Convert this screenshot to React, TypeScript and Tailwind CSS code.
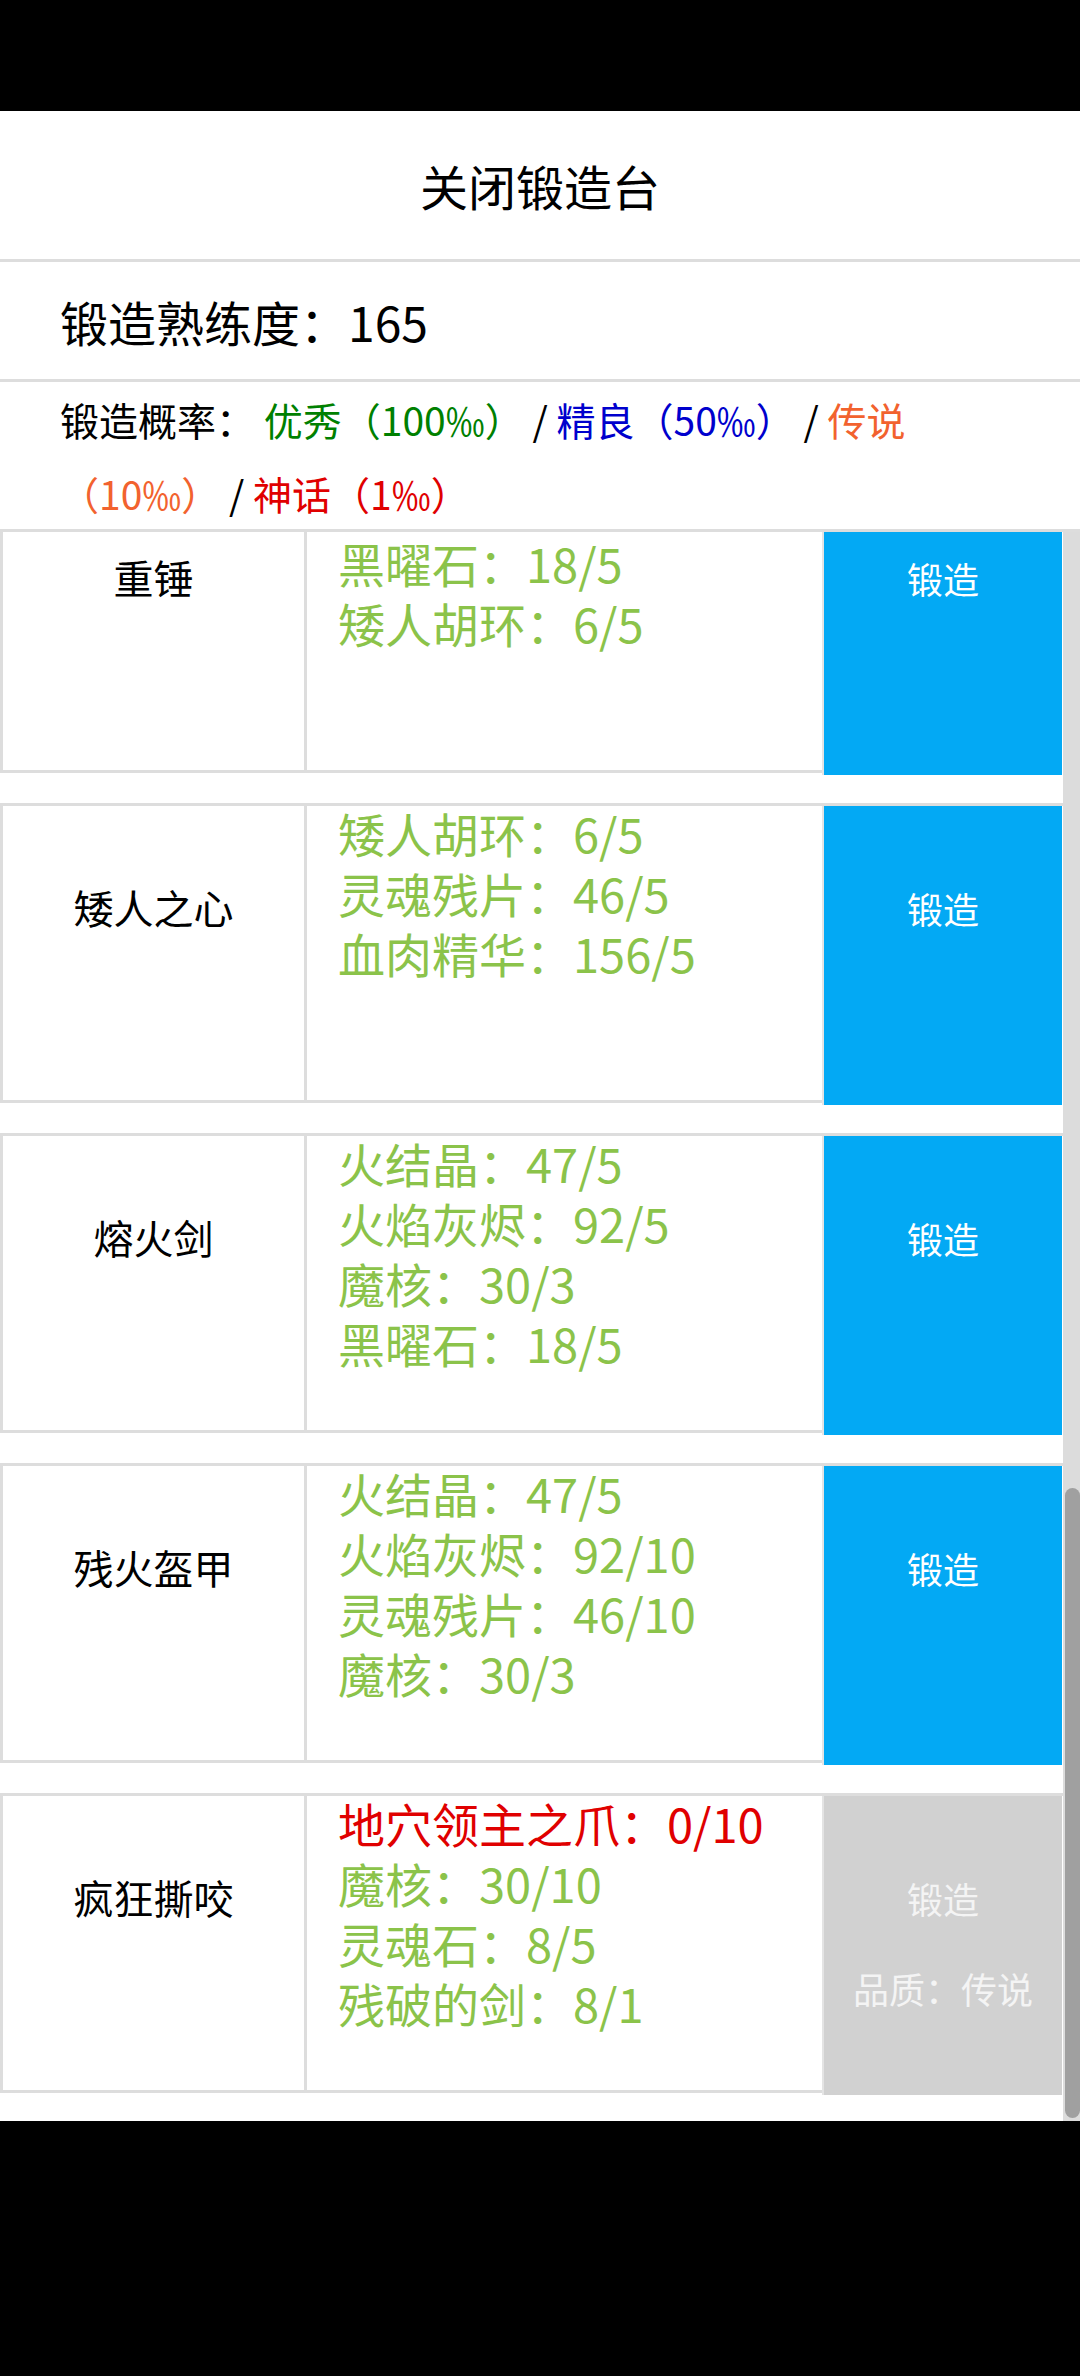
import React from 'react';

type Material = { label: string; lack?: boolean };

interface Recipe {
  name: string;
  materials: Material[];
  disabled?: boolean;
  quality?: string;
  // first material line is scrolled out of view
  clippedTop?: boolean;
}

const recipes: Recipe[] = [
  {
    name: '重锤',
    materials: [{ label: '黑曜石：18/5' }, { label: '矮人胡环：6/5' }],
    clippedTop: true,
  },
  {
    name: '矮人之心',
    materials: [{ label: '矮人胡环：6/5' }, { label: '灵魂残片：46/5' }, { label: '血肉精华：156/5' }],
  },
  {
    name: '熔火剑',
    materials: [
      { label: '火结晶：47/5' },
      { label: '火焰灰烬：92/5' },
      { label: '魔核：30/3' },
      { label: '黑曜石：18/5' },
    ],
  },
  {
    name: '残火盔甲',
    materials: [
      { label: '火结晶：47/5' },
      { label: '火焰灰烬：92/10' },
      { label: '灵魂残片：46/10' },
      { label: '魔核：30/3' },
    ],
  },
  {
    name: '疯狂撕咬',
    materials: [
      { label: '地穴领主之爪：0/10', lack: true },
      { label: '魔核：30/10' },
      { label: '灵魂石：8/5' },
      { label: '残破的剑：8/1' },
    ],
    disabled: true,
    quality: '品质：传说',
  },
];

const RecipeRow: React.FC<{ recipe: Recipe }> = ({ recipe }) => (
  <div className="flex w-[1063px] h-[302px] mb-[28px] border-t-[3px] border-[#dddddd]">
    {/* Name */}
    <div className="w-[304px] mb-[2px] border-l-[3px] border-b-[3px] border-[#dddddd] pt-[76px] text-center text-[40px] leading-[50px] text-black">
      {recipe.name}
    </div>

    {/* Materials */}
    <div className={`flex-1 mb-[2px] border-l-[3px] border-b-[3px] border-[#dddddd] pl-[31px] ${recipe.clippedTop ? 'pt-[57px]' : '-mt-[3px]'}`}>
      {recipe.materials.map((m, i) => (
        <div
          key={i}
          className={`text-[47px] leading-[60px] whitespace-nowrap ${m.lack ? 'text-[#e00000]' : 'text-[#8bc34a]'}`}
        >
          {m.label}
        </div>
      ))}
    </div>

    {/* Action */}
    <div
      className={`w-[240px] mr-[1px] flex flex-col items-center pt-[77px] text-[36px] leading-[50px] border-l-[2px] border-[#e4e4e4] ${
        recipe.disabled ? 'bg-[#d1d1d1] text-[#f4f4f4]' : 'bg-[#03a9f4] text-white'
      }`}
    >
      <span>锻造</span>
      {recipe.quality && <span className="mt-[40px]">{recipe.quality}</span>}
    </div>
  </div>
);

export default function App() {
  return (
    <div className="w-[1080px] h-[2376px] bg-black flex flex-col font-['Noto_Sans_CJK_SC',sans-serif]">
      <div className="h-[111px] shrink-0" />

      <div className="h-[2010px] shrink-0 bg-white flex flex-col">
        {/* Close */}
        <div className="h-[151px] shrink-0 flex items-center justify-center border-b-[3px] border-[#dddddd] text-[48px] text-black">
          关闭锻造台
        </div>

        {/* Proficiency */}
        <div className="h-[120px] shrink-0 flex items-center pl-[60px] border-b-[3px] border-[#dddddd] text-[48px] text-black">
          锻造熟练度：165
        </div>

        {/* Probabilities */}
        <div className="h-[150px] shrink-0 pl-[60px] text-[39px] leading-[74px] text-black border-b-[3px] border-[#dddddd]">
          <div className="whitespace-nowrap">
            锻造概率：{' '}
            <span className="text-[#008000]">优秀（100‰）</span> /{' '}
            <span className="text-[#0000cd]">精良（50‰）</span> /{' '}
            <span className="text-[#f2622e]">传说</span>
          </div>
          <div className="whitespace-nowrap">
            <span className="text-[#f2622e]">（10‰）</span> /{' '}
            <span className="text-[#e00000]">神话（1‰）</span>
          </div>
        </div>

        {/* Recipe list (scrolled to the end) */}
        <div className="relative flex-1 overflow-hidden">
          <div className="-mt-[59px]">
            {recipes.map((r) => (
              <RecipeRow key={r.name} recipe={r} />
            ))}
          </div>

          {/* scrollbar */}
          <div className="absolute top-0 bottom-0 right-0 w-[17px] bg-[#dcdcdc]">
            <div className="absolute right-0 w-[15px] top-[956px] bottom-[3px] rounded-full bg-[#a0a0a0]" />
          </div>
        </div>
      </div>
    </div>
  );
}
